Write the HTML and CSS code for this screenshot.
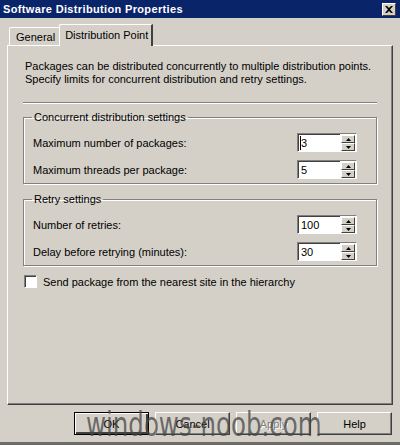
FILE: index.html
```html
<!DOCTYPE html>
<html>
<head>
<meta charset="utf-8">
<link rel="stylesheet" href="styles.css">
</head>
<body>
<div class="window">
  <div class="titlebar">
    <span class="title">Software Distribution Properties</span>
    <span class="close"><svg width="8" height="7" viewBox="0 0 8 7"><path d="M0 0h2l2 2 2-2h2L5 3.5 8 7H6L4 5 2 7H0l3-3.5z" fill="#000"/></svg></span>
  </div>
  <div class="tabs">
    <div class="tab">General</div>
    <div class="tab selected">Distribution Point</div>
  </div>
  <div class="panel">
    <p class="intro">Packages can be distributed concurrently to multiple distribution points.<br>Specify limits for concurrent distribution and retry settings.</p>
    <div class="sep"></div>
    <fieldset class="group">
      <legend>Concurrent distribution settings</legend>
      <div class="row">
        <span>Maximum number of packages:</span>
        <div class="spin"><div class="edit"><span class="caret"></span>3</div><div class="arrows"><div class="arr"><svg width="5" height="3"><path d="M2.5 0L5 3H0z" fill="#000"/></svg></div><div class="arr"><svg width="5" height="3"><path d="M0 0h5L2.5 3z" fill="#000"/></svg></div></div></div>
      </div>
      <div class="row">
        <span>Maximum threads per package:</span>
        <div class="spin"><div class="edit">5</div><div class="arrows"><div class="arr"><svg width="5" height="3"><path d="M2.5 0L5 3H0z" fill="#000"/></svg></div><div class="arr"><svg width="5" height="3"><path d="M0 0h5L2.5 3z" fill="#000"/></svg></div></div></div>
      </div>
    </fieldset>
    <fieldset class="group">
      <legend>Retry settings</legend>
      <div class="row">
        <span>Number of retries:</span>
        <div class="spin"><div class="edit">100</div><div class="arrows"><div class="arr"><svg width="5" height="3"><path d="M2.5 0L5 3H0z" fill="#000"/></svg></div><div class="arr"><svg width="5" height="3"><path d="M0 0h5L2.5 3z" fill="#000"/></svg></div></div></div>
      </div>
      <div class="row">
        <span>Delay before retrying (minutes):</span>
        <div class="spin"><div class="edit">30</div><div class="arrows"><div class="arr"><svg width="5" height="3"><path d="M2.5 0L5 3H0z" fill="#000"/></svg></div><div class="arr"><svg width="5" height="3"><path d="M0 0h5L2.5 3z" fill="#000"/></svg></div></div></div>
      </div>
    </fieldset>
    <label class="check"><span class="box"></span>Send package from the nearest site in the hierarchy</label>
  </div>
  <div class="buttons">
    <div class="btn default">OK</div>
    <div class="btn">Cancel</div>
    <div class="btn disabled">Apply</div>
    <div class="btn">Help</div>
  </div>
  <div class="watermark">windows-noob.com</div>
</div>
</body>
</html>
```
FILE: styles.css
```css
html, body {
  margin: 0;
  padding: 0;
}
body {
  width: 400px;
  height: 445px;
  background: #d4d0c8;
  font-family: "Liberation Sans", Arial, sans-serif;
  font-size: 11px;
  color: #000;
  overflow: hidden;
}
.window {
  position: relative;
  width: 400px;
  height: 445px;
  display: flex;
  flex-direction: column;
  box-sizing: border-box;
  border-bottom: 3px solid #6e6c68;
}
.titlebar {
  height: 18px;
  background: #0a246a;
  display: flex;
  align-items: center;
  justify-content: space-between;
  padding: 0 4px 0 3px;
}
.title {
  color: #fff;
  font-weight: bold;
  font-size: 11px;
  letter-spacing: 0.35px;
}
.close {
  width: 14px;
  height: 13px;
  box-sizing: border-box;
  background: #d4d0c8;
  border-top: 1px solid #fff;
  border-left: 1px solid #fff;
  border-right: 1px solid #404040;
  border-bottom: 1px solid #404040;
  display: flex;
  align-items: center;
  justify-content: center;
}
.tabs {
  display: flex;
  align-items: flex-end;
  margin: 6px 0 0 9px;
  height: 21px;
}
.tab {
  height: 18px;
  box-sizing: border-box;
  padding: 3px 5px 0 6px;
  border-top: 1px solid #fff;
  border-left: 1px solid #fff;
  border-right: 1px solid #808080;
  border-top-left-radius: 2px;
}
.tab.selected {
  height: 22px;
  margin-bottom: -1px;
  margin-left: -2px;
  padding: 4px 3px 0 5px;
  background: #d4d0c8;
  border-right: 2px solid #404040;
  position: relative;
  z-index: 1;
}
.panel {
  margin: 0 7px 0 7px;
  height: 360px;
  box-sizing: border-box;
  border-top: 1px solid #fff;
  border-left: 1px solid #fff;
  border-right: 1px solid #404040;
  border-bottom: 1px solid #404040;
  box-shadow: inset -1px -1px 0 #808080;
  padding: 14px 15px 0 15px;
}
.intro {
  margin: 0 0 0 2px;
  line-height: 13px;
}
.sep {
  margin-top: 16px;
  border-top: 1px solid #808080;
  border-bottom: 1px solid #fff;
}
.group {
  margin: 7px 0 0 0;
  padding: 2px 19px 4px 9px;
  border: 1px solid #808080;
  box-shadow: 1px 1px 0 #fff, inset 1px 1px 0 #fff;
}
.group + .group {
  margin-top: 9px;
}
legend {
  padding: 0 2px;
  margin-left: -1px;
}
.row {
  display: flex;
  align-items: center;
  justify-content: space-between;
  height: 19px;
  margin-top: 8px;
}
.row + .row {
  margin-top: 8px;
}
.spin {
  display: flex;
  align-items: stretch;
  width: 60px;
  height: 19px;
}
.edit {
  flex: 1;
  background: #fff;
  box-sizing: border-box;
  border-top: 1px solid #808080;
  border-left: 1px solid #808080;
  border-bottom: 1px solid #fff;
  box-shadow: inset 1px 1px 0 #404040;
  padding: 2px 0 0 3px;
  font-size: 11px;
  line-height: 14px;
  position: relative;
}
.caret {
  position: absolute;
  left: 2px;
  top: 2px;
  width: 1px;
  height: 14px;
  background: #000;
}
.arrows {
  width: 17px;
  display: flex;
  flex-direction: column;
  box-sizing: border-box;
  border-top: 1px solid #808080;
  border-right: 1px solid #fff;
  border-bottom: 1px solid #fff;
  padding: 1px 1px 0 1px;
  background: #fff;
}
.arr {
  flex: 1;
  background: #d4d0c8;
  box-sizing: border-box;
  border-top: 1px solid #fff;
  border-left: 1px solid #fff;
  border-right: 1px solid #404040;
  border-bottom: 1px solid #404040;
  display: flex;
  align-items: center;
  justify-content: center;
}
.check {
  display: flex;
  align-items: center;
  margin: 9px 0 0 1px;
}
.box {
  width: 13px;
  height: 13px;
  box-sizing: border-box;
  background: #fff;
  border-top: 1px solid #808080;
  border-left: 1px solid #808080;
  border-right: 1px solid #fff;
  border-bottom: 1px solid #fff;
  box-shadow: inset 1px 1px 0 #404040;
  margin-right: 6px;
}
.buttons {
  display: flex;
  justify-content: flex-end;
  gap: 6px;
  margin: 7px 8px 0 0;
}
.btn {
  width: 75px;
  height: 23px;
  box-sizing: border-box;
  border-top: 1px solid #fff;
  border-left: 1px solid #fff;
  border-right: 1px solid #404040;
  border-bottom: 1px solid #404040;
  box-shadow: inset -1px -1px 0 #808080;
  display: flex;
  align-items: center;
  justify-content: center;
}
.btn.default {
  border: 1px solid #000;
  box-shadow: inset 1px 1px 0 #fff, inset -2px -2px 0 #404040;
}
.btn.disabled {
  color: #808080;
  text-shadow: 1px 1px 0 #fff;
}
.watermark {
  position: absolute;
  left: 86px;
  top: 404px;
  font-family: "DejaVu Sans", sans-serif;
  font-size: 34px;
  color: rgba(70, 70, 70, 0.75);
  transform-origin: left top;
  transform: scaleX(0.72);
  white-space: nowrap;
}
```
